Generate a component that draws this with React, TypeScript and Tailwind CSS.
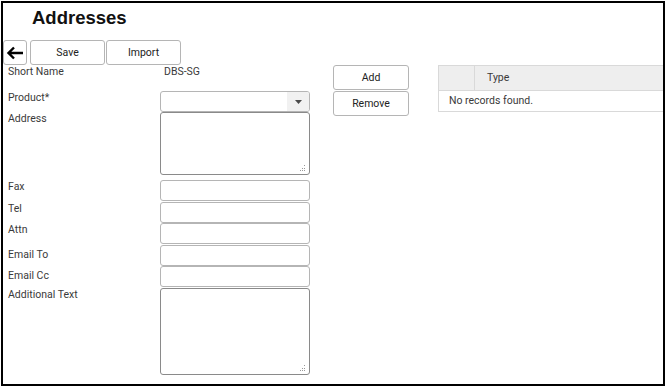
import React from "react";

function Grip() {
  return (
    <svg width="7" height="7" viewBox="0 0 7 7" className="absolute bottom-[2px] right-[3px]">
      <rect x="5" y="0" width="1" height="1" fill="#999" />
      <rect x="3" y="3" width="1" height="1" fill="#999" />
      <rect x="5" y="3" width="1" height="1" fill="#999" />
      <rect x="1" y="5" width="1" height="1" fill="#999" />
      <rect x="3" y="5" width="1" height="1" fill="#999" />
      <rect x="5" y="5" width="1" height="1" fill="#999" />
    </svg>
  );
}

function Field({ label, h, labelPad = "" }: { label: string; h: string; labelPad?: string }) {
  return (
    <div className="flex">
      <div className={`w-[152px] leading-[13px] ${labelPad}`}>{label}</div>
      <div className={`w-[150px] ${h} border border-[#b5b5b5] rounded-[3px] bg-white`} />
    </div>
  );
}

function Area({ label, h, cls = "" }: { label: string; h: string; cls?: string }) {
  return (
    <div className={`flex ${cls}`}>
      <div className="w-[152px] leading-[13px]">{label}</div>
      <div className={`relative w-[150px] ${h} border border-[#8a8a8a] rounded-[3px] bg-white`}>
        <Grip />
      </div>
    </div>
  );
}

export default function App() {
  return (
    <div className="ml-px mt-px w-[664px] h-[385px] border-2 border-black overflow-hidden bg-white font-['Roboto',sans-serif] text-[10.5px] text-[#3a3a3a]">
      {/* Title */}
      <h1 className="pl-[29px] pt-[3px] mb-[11px] font-['Liberation_Sans',Arial,sans-serif] text-[18.5px] leading-[23px] font-bold text-[#111]">
        Addresses
      </h1>

      {/* Toolbar */}
      <div className="flex h-[25px]">
        <button className="w-[24px] h-[25px] flex items-center justify-center border border-[#b5b5b5] rounded-[3px] bg-white">
          <svg width="18" height="14" viewBox="0 0 18 14">
            <path d="M17 7H3M8 1.5L2.5 7L8 12.5" fill="none" stroke="#000" strokeWidth="2.4" />
          </svg>
        </button>
        <button className="ml-[3px] w-[75px] h-[25px] border border-[#b5b5b5] rounded-[3px] bg-white text-[10.5px] text-[#222]">
          Save
        </button>
        <button className="ml-px w-[75px] h-[25px] border border-[#b5b5b5] rounded-[3px] bg-white text-[10.5px] text-[#222]">
          Import
        </button>
      </div>

      {/* Body */}
      <div className="flex items-start">
        {/* Form */}
        <div className="pl-[5px] flex flex-col">
          <div className="flex h-[26px]">
            <div className="w-[152px] leading-[13px]">Short Name</div>
            <div className="pl-[4px] leading-[13px]">DBS-SG</div>
          </div>
          <div className="flex">
            <div className="w-[152px] leading-[13px]">Product*</div>
            <div className="flex w-[150px] h-[21px] border border-[#b5b5b5] rounded-[3px] bg-white overflow-hidden">
              <div className="flex-1" />
              <div className="w-[22px] bg-[#f1f1f1] flex items-center justify-center">
                <svg width="7" height="4" viewBox="0 0 7 4">
                  <path d="M0 0H7L3.5 4Z" fill="#4a4a4a" />
                </svg>
              </div>
            </div>
          </div>
          <Area label="Address" h="h-[63px]" />
          <div className="mt-[5px] flex flex-col">
            <Field label="Fax" h="h-[21px]" />
            <div className="mt-px"><Field label="Tel" h="h-[21px]" /></div>
            <div><Field label="Attn" h="h-[21px]" /></div>
            <div className="mt-px"><Field label="Email To" h="h-[21px]" labelPad="pt-[3px]" /></div>
            <div><Field label="Email Cc" h="h-[21px]" labelPad="pt-[3px]" /></div>
            <Area label="Additional Text" h="h-[87px]" cls="mt-px" />
          </div>
        </div>

        {/* Add / Remove */}
        <div className="ml-[23px] flex flex-col gap-px">
          <button className="w-[76px] h-[25px] border border-[#b5b5b5] rounded-[3px] bg-white text-[10.5px] text-[#222]">
            Add
          </button>
          <button className="w-[76px] h-[25px] border border-[#b5b5b5] rounded-[3px] bg-white text-[10.5px] text-[#222]">
            Remove
          </button>
        </div>

        {/* Table */}
        <div className="ml-[29px] w-[240px] shrink-0 border border-[#d9d9d9]">
          <div className="flex h-[25px] bg-[#eeeeee] border-b border-[#d9d9d9]">
            <div className="w-[36px] border-r border-[#d9d9d9]" />
            <div className="pl-[12px] flex items-center">Type</div>
          </div>
          <div className="h-[20px] pl-[10px] flex items-center">No records found.</div>
        </div>
      </div>
    </div>
  );
}
